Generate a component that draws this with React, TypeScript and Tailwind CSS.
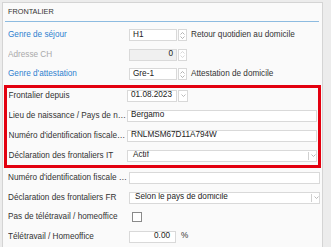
import React from 'react'

const FONT = "font-['Liberation_Sans',Arial,sans-serif]"

function Spinner({ disabled }: { disabled?: boolean }) {
    const c = disabled ? '#cfcfcf' : '#a0a0a0'
    return (
        <div className="ml-[1px] flex h-full w-[9px] flex-col items-center justify-center gap-[1px] border border-[#d8d8d8] bg-white">
            <svg width="5" height="3" viewBox="0 0 5 3">
                <path d="M0.5 2.5 L2.5 0.5 L4.5 2.5" fill="none" stroke={c} strokeWidth="0.8" />
            </svg>
            <svg width="5" height="3" viewBox="0 0 5 3">
                <path d="M0.5 0.5 L2.5 2.5 L4.5 0.5" fill="none" stroke={c} strokeWidth="0.8" />
            </svg>
        </div>
    )
}

function Chevron() {
    return (
        <svg width="5" height="3" viewBox="0 0 5 3">
            <path d="M0.5 0.5 L2.5 2.5 L4.5 0.5" fill="none" stroke="#a8a8a8" strokeWidth="0.8" />
        </svg>
    )
}

function Row({ label, tone = 'dark', labelW, children }: { label: string; tone?: 'blue' | 'gray' | 'dark'; labelW: string; children: React.ReactNode }) {
    const color = tone === 'blue' ? 'text-[#2f7fcf]' : tone === 'gray' ? 'text-[#a9a9a9]' : 'text-[#333333]'
    return (
        <div className="flex h-[12px] items-center">
            <div className={`${labelW} shrink-0 truncate pr-[1px] leading-[12px] ${color}`}>{label}</div>
            {children}
        </div>
    )
}

function Box({ children, className = '' }: { children?: React.ReactNode; className?: string }) {
    return (
        <div className={`flex h-full items-center border border-[#d9d9d9] bg-white px-[3px] leading-none text-[#222222] ${className}`}>
            {children}
        </div>
    )
}

function Select({ value }: { value: string }) {
    return (
        <div className="flex h-full flex-1 items-center overflow-hidden border border-[#d9d9d9] bg-white leading-none text-[#222222]">
            <span className="flex-1 pl-[5px]">{value}</span>
            <div className="flex h-full w-[8px] shrink-0 items-center justify-start">
                <div className="mr-[2px] h-[8px] w-px bg-[#d0d0d0]" />
                <Chevron />
            </div>
        </div>
    )
}

export default function App() {
    return (
        <div className={`h-[247px] w-[331px] overflow-hidden bg-[#ececec] text-[8.2px] ${FONT}`}>
            <div className="ml-[2px] mt-[2px] h-[260px] w-[321px] border border-[#d4d4d4] bg-[#fafafa]">
                <div className="flex h-[18px] items-center pl-[5px] text-[7.3px] uppercase text-[#333333]">Frontalier</div>
                <div className="ml-[2px] mr-[3px] h-px bg-[#8dbbe0]" />

                <div className="mt-[7px] flex flex-col gap-[7.5px] pl-[5px]">
                    <Row label="Genre de séjour" tone="blue" labelW="w-[121px]">
                        <Box className="w-[48px]">H1</Box>
                        <Spinner />
                        <span className="ml-[4px] text-[#333333]">Retour quotidien au domicile</span>
                    </Row>
                    <Row label="Adresse CH" tone="gray" labelW="w-[121px]">
                        <Box className="w-[48px] justify-end !bg-[#f0f0f0]">0</Box>
                        <Spinner disabled />
                    </Row>
                    <Row label="Genre d'attestation" tone="blue" labelW="w-[121px]">
                        <Box className="w-[48px]">Gre-1</Box>
                        <Spinner />
                        <span className="ml-[4px] text-[#333333]">Attestation de domicile</span>
                    </Row>
                </div>

                <div className="ml-[1px] mr-[1px] mt-[5px] flex flex-col gap-[8px] border-[3px] border-[#e3000f] pb-[3.5px] pl-[1.5px] pr-[1.3px] pt-[1.5px]">
                    <Row label="Frontalier depuis" labelW="w-[118.5px]">
                        <Box className="w-[50px]">01.08.2023</Box>
                        <div className="ml-[1px] flex h-full w-[10px] items-center justify-center border border-[#d8d8d8] bg-white">
                            <Chevron />
                        </div>
                    </Row>
                    <Row label="Lieu de naissance / Pays de naissance" labelW="w-[118.5px]">
                        <Box className="flex-1">Bergamo</Box>
                    </Row>
                    <Row label="Numéro d'identification fiscale IT" labelW="w-[118.5px]">
                        <Box className="flex-1">RNLMSM67D11A794W</Box>
                    </Row>
                    <Row label="Déclaration des frontaliers IT" labelW="w-[118.5px]">
                        <Select value="Actif" />
                    </Row>
                </div>

                <div className="mt-[4px] flex flex-col gap-[7.5px] pl-[5px] pr-[2px]">
                    <Row label="Numéro d'identification fiscale française" labelW="w-[121px]">
                        <Box className="flex-1" />
                    </Row>
                    <Row label="Déclaration des frontaliers FR" labelW="w-[121px]">
                        <Select value="Selon le pays de domicile" />
                    </Row>
                    <Row label="Pas de télétravail / homeoffice" labelW="w-[121px]">
                        <div className="ml-[3px] h-[10px] w-[10px] border border-[#8a8a8a] bg-white" />
                    </Row>
                    <Row label="Télétravail / Homeoffice" labelW="w-[121px]">
                        <Box className="w-[47px] justify-end pr-[5px]">0.00</Box>
                        <span className="ml-[5px] text-[#333333]">%</span>
                    </Row>
                </div>
            </div>
        </div>
    )
}
